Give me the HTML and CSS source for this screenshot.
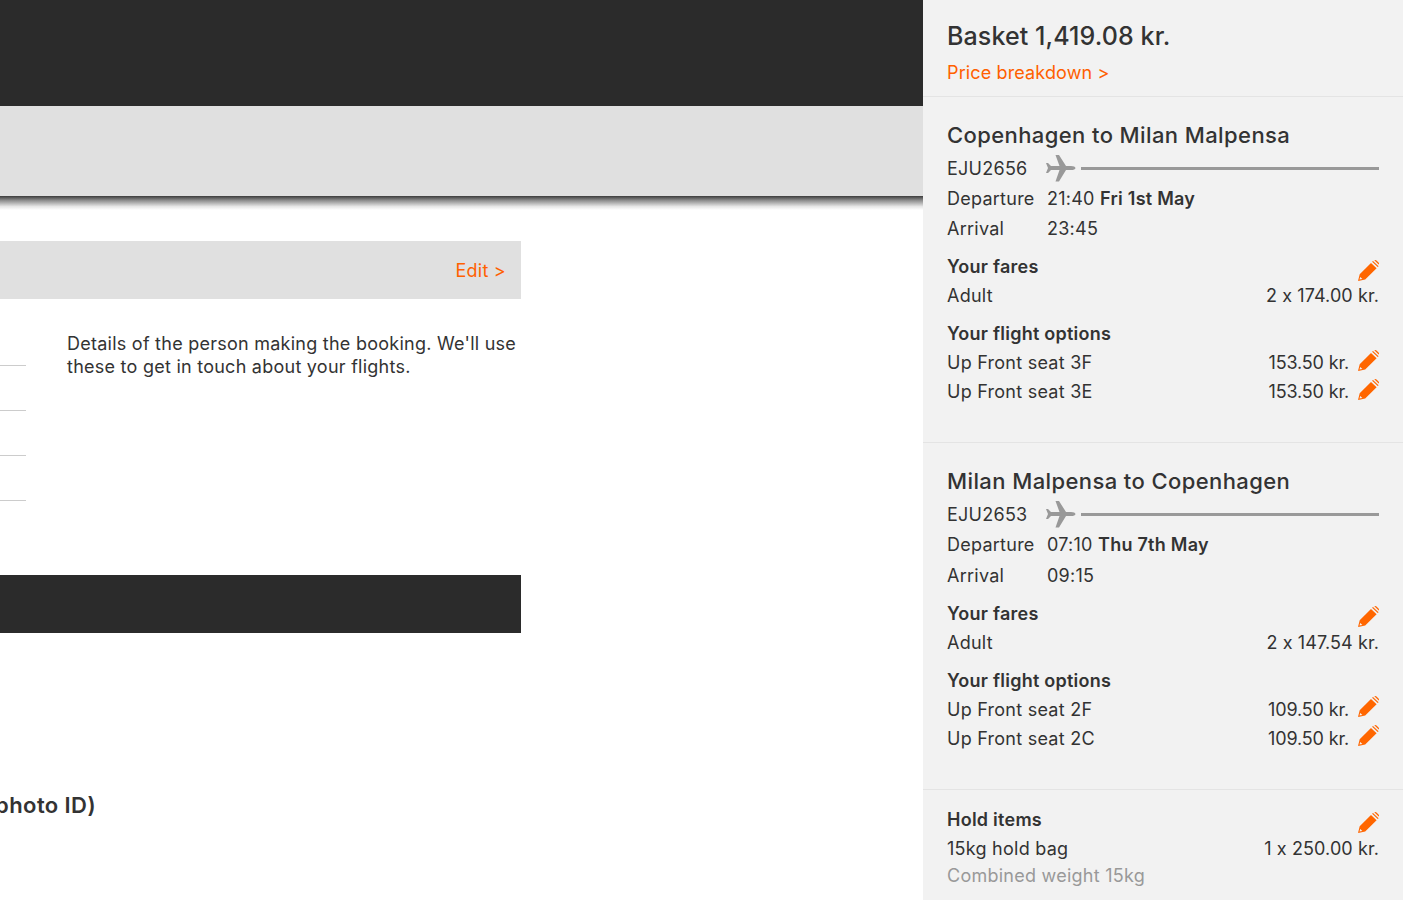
FILE: index.html
```html
<!DOCTYPE html>
<html lang="en">
<head>
<meta charset="utf-8">
<title>Booking</title>
<link rel="stylesheet" href="styles.css">
</head>
<body>
<svg class="defs" width="0" height="0" aria-hidden="true">
  <symbol id="pencil" viewBox="0 0 21 21">
    <path fill-rule="evenodd" d="M0 21 1.7 14.3 13 2.9l5.6 5.4L7.2 19.6zM2.2 16.9l-.7 2.7 2.9-.7z"/>
    <path d="M14.1 1.8 15 .9l5.6 5.3-.9.9z"/>
    <path d="M16.3.3Q17.5-.3 18.5.5l2 1.9q.9 1.1.2 2.2z"/>
  </symbol>
  <symbol id="plane" viewBox="0 0 31 29">
    <path d="M30.5 14Q30 12 26 12H21L14 1H10.5L14.5 12H6L3 9H1L3 14 1 19H3L6 16H14.5L10.5 27.5H14L21 16H26Q30 16 30.5 14Z"/>
  </symbol>
</svg>
<div class="page">
  <main class="main">
    <div class="top-dark"></div>
    <div class="top-grey"></div>
    <div class="top-shadow"></div>
    <div class="column">
      <div class="edit-bar"><a class="link">Edit &gt;</a></div>
      <div class="contact">
        <div class="fields">
          <div class="field"></div>
          <div class="field"></div>
          <div class="field"></div>
          <div class="field"></div>
        </div>
        <p class="contact-note">Details of the person making the booking. We'll use these to get in touch about your flights.</p>
      </div>
      <div class="dark-bar"></div>
      <h2 class="id-heading"><span>Name as shown on photo ID)</span></h2>
    </div>
  </main>
  <aside class="basket">
    <section class="basket-head">
      <h1 class="basket-total">Basket 1,419.08 kr.</h1>
      <a class="link breakdown">Price breakdown &gt;</a>
    </section>
    <section class="leg leg-out">
      <h2 class="leg-title">Copenhagen to Milan Malpensa</h2>
      <div class="flight"><span class="flight-no">EJU2656</span><svg class="plane"><use href="#plane"/></svg><span class="flight-line"></span></div>
      <div class="row time"><span class="time-label">Departure</span><span>21:40 <b>Fri 1st May</b></span></div>
      <div class="row time"><span class="time-label">Arrival</span><span>23:45</span></div>
      <div class="row group-head"><b>Your fares</b><svg class="pencil"><use href="#pencil"/></svg></div>
      <div class="row"><span>Adult</span><span class="amount">2 x 174.00 kr.</span></div>
      <div class="row group-head"><b>Your flight options</b></div>
      <div class="row"><span>Up Front seat 3F</span><span class="price">153.50 kr.<svg class="pencil"><use href="#pencil"/></svg></span></div>
      <div class="row"><span>Up Front seat 3E</span><span class="price">153.50 kr.<svg class="pencil"><use href="#pencil"/></svg></span></div>
    </section>
    <section class="leg leg-back">
      <h2 class="leg-title">Milan Malpensa to Copenhagen</h2>
      <div class="flight"><span class="flight-no">EJU2653</span><svg class="plane"><use href="#plane"/></svg><span class="flight-line"></span></div>
      <div class="row time"><span class="time-label">Departure</span><span>07:10 <b>Thu 7th May</b></span></div>
      <div class="row time"><span class="time-label">Arrival</span><span>09:15</span></div>
      <div class="row group-head"><b>Your fares</b><svg class="pencil"><use href="#pencil"/></svg></div>
      <div class="row"><span>Adult</span><span class="amount">2 x 147.54 kr.</span></div>
      <div class="row group-head"><b>Your flight options</b></div>
      <div class="row"><span>Up Front seat 2F</span><span class="price">109.50 kr.<svg class="pencil"><use href="#pencil"/></svg></span></div>
      <div class="row"><span>Up Front seat 2C</span><span class="price">109.50 kr.<svg class="pencil"><use href="#pencil"/></svg></span></div>
    </section>
    <section class="hold">
      <div class="row group-head-plain"><b>Hold items</b><svg class="pencil"><use href="#pencil"/></svg></div>
      <div class="row"><span>15kg hold bag</span><span class="amount">1 x 250.00 kr.</span></div>
      <div class="row muted"><span>Combined weight 15kg</span></div>
    </section>
  </aside>
</div>
</body>
</html>
```
FILE: styles.css
```css
html, body {
  margin: 0;
  height: 100%;
  overflow: hidden;
  background: #fff;
}
body {
  font-family: "Inter", "Liberation Sans", sans-serif;
  font-size: 18px;
  letter-spacing: 0.25px;
  color: #333;
}
.defs { position: absolute; }
.page {
  display: flex;
  height: 900px;
  overflow: hidden;
}
.main {
  width: 923px;
  flex: none;
  overflow: hidden;
}
.top-dark { height: 106px; background: #2b2b2b; }
.top-grey { height: 90px; background: #e0e0e0; }
.top-shadow {
  height: 14px;
  background: linear-gradient(#3c3c3c, #8a8a8a 30%, #e6e6e6 75%, #fff);
}
.column {
  width: 521px;
  padding-top: 31px;
}
.edit-bar {
  height: 57px;
  padding: 1px 15px 0 0;
  background: #e0e0e0;
  display: flex;
  align-items: center;
  justify-content: flex-end;
}
.link { color: #ff6000; }
.contact {
  display: flex;
  height: 276px;
}
.fields {
  width: 26px;
  padding-top: 22px;
  flex: none;
}
.field {
  height: 44px;
  border-bottom: 1px solid #ccc;
}
.contact-note {
  margin: 33px 4px 0 41px;
  line-height: 23px;
}
.dark-bar { height: 58px; background: #2b2b2b; }
.id-heading {
  display: flex;
  justify-content: flex-end;
  width: 96px;
  margin: 157px 0 0;
  font-size: 22px;
  letter-spacing: 0.4px;
  line-height: 30px;
  font-weight: 600;
  white-space: nowrap;
}
.id-heading span { flex: none; }
.basket {
  width: 480px;
  flex: none;
  background: #f2f2f2;
}
.basket-head {
  height: 96px;
  padding: 0 24px;
  border-bottom: 1px solid #e4e4e4;
}
.basket-total {
  margin: 0;
  padding-top: 20px;
  font-size: 25px;
  letter-spacing: 0.1px;
  line-height: 32px;
  font-weight: 500;
}
.breakdown {
  display: block;
  margin-top: 9px;
  line-height: 24px;
  letter-spacing: 0.13px;
}
.leg {
  padding: 0 24px;
  border-bottom: 1px solid #e4e4e4;
}
.leg-out { height: 345px; }
.leg-back { height: 346px; }
.leg-title {
  margin: 0;
  padding-top: 23px;
  font-size: 22px;
  letter-spacing: 0.4px;
  line-height: 30px;
  font-weight: 500;
}
.flight {
  display: flex;
  align-items: center;
  height: 30px;
  margin-top: 3px;
}
.flight-no { width: 98px; flex: none; }
.plane {
  width: 31px;
  height: 29px;
  fill: #999;
  flex: none;
}
.flight-line {
  flex: 1;
  height: 3px;
  margin-left: 5px;
  background: #999;
}
.row {
  display: flex;
  justify-content: space-between;
  align-items: center;
  height: 29px;
}
.row b { font-weight: 600; }
.time { justify-content: flex-start; height: 30px; }
.leg-back .time + .time { margin-top: 1px; }
.time-label { width: 100px; flex: none; }
.group-head { margin-top: 9px; }
.amount { letter-spacing: 0.1px; }
.price {
  display: flex;
  align-items: center;
  gap: 9px;
  letter-spacing: -0.15px;
}
.pencil {
  width: 21px;
  height: 21px;
  fill: #ff6600;
  flex: none;
}
.price .pencil { margin-bottom: 4px; }
.leg-back .price .pencil { margin-bottom: 6px; }
.group-head .pencil { align-self: flex-end; }
.leg-back .group-head .pencil { align-self: flex-end; margin-bottom: 1px; }
.group-head-plain .pencil { align-self: flex-end; margin-bottom: 1px; }
.hold { padding: 15px 24px 0; }
.muted { color: #999; height: 25px; }
```
